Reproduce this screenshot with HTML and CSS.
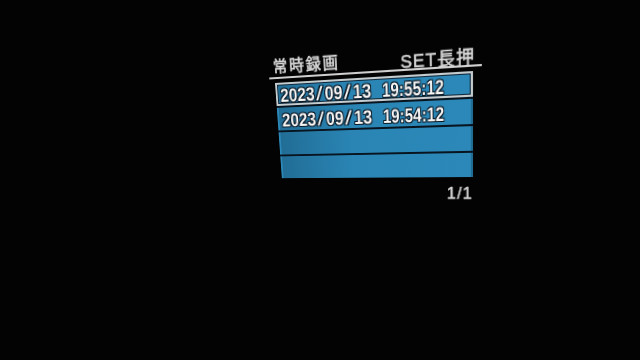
FILE: index.html
```html
<!DOCTYPE html>
<html lang="ja">
<head>
  <meta charset="UTF-8" />
  <meta name="viewport" content="width=device-width, initial-scale=1.0"/>
  <title>常時録画</title>
  <link rel="stylesheet" href="styles.css">
</head>
<body>
  <div class="screen">
    <div class="header">
      <span class="title">常時録画</span>
      <span class="hint">SET長押</span>
    </div>
    <div class="list">
      <div class="row selected">
        <span class="date">2023<span class="sep">/</span>09<span class="sep">/</span>13</span><span class="time">19:55:12</span>
      </div>
      <div class="row">
        <span class="date">2023<span class="sep">/</span>09<span class="sep">/</span>13</span><span class="time">19:54:12</span>
      </div>
      <div class="row"></div>
      <div class="row"></div>
    </div>
    <div class="pager">1/1</div>
  </div>
</body>
</html>
```

FILE: styles.css
```css
html, body {
  margin: 0;
  height: 100%;
  background-color: #030303;
}
body {
  padding: 48px 0 0 264px;
  box-sizing: border-box;
  overflow: hidden;
  font-family: "Liberation Sans", "Noto Sans CJK JP", sans-serif;
}
/* the photo looks at the screen a bit from the side */
.screen {
  width: 214px;
  transform-origin: 0 0;
  transform: matrix3d(0.89255, -0.07237, 0, -0.00051249, 0.07436, 0.98875, 0, 0.00035582, 0, 0, 1, 0, 3.07, 0.179, 0, 1);
  filter: blur(0.3px);
}
.header {
  display: flex;
  justify-content: space-between;
  align-items: flex-end;
  height: 30px;
  border-bottom: 2px solid #cfcfcf;
  padding: 0 6px 0 5px;
  color: #d8d8d8;
}
.title {
  font-family: "Noto Sans CJK JP", sans-serif;
  font-size: 16px;
  line-height: 16px;
  letter-spacing: 2px;
  padding-bottom: 4.5px;
  -webkit-text-stroke: 0.6px #d8d8d8;
}
.hint {
  font-size: 16.5px;
  line-height: 14px;
  letter-spacing: 1px;
  -webkit-text-stroke: 0.5px #d8d8d8;
}
.list {
  display: grid;
  grid-template-columns: minmax(0, 1fr);
  grid-auto-rows: 24px;
  row-gap: 2px;
  margin: 4px 8px 0 6px;
  background-color: #08141f;
}
.row {
  display: flex;
  box-sizing: border-box;
  min-width: 0;
  border: 2px solid transparent;
  padding: 3px 0 0 3px;
  background: linear-gradient(to right, #216d96, #2a85b4 40%, #2b88b8);
  color: #f6f6f6;
  font-size: 19.5px;
  font-weight: bold;
  line-height: 17px;
  white-space: nowrap;
  text-shadow: 1px 1px 0 #0a1824, -1px -1px 0 #0a1824, 1px -1px 0 #0a1824, -1px 1px 0 #0a1824;
}
.row.selected {
  border-color: #c4cccf;
  box-shadow: inset 0 0 0 1px #10283a;
}
.date, .time {
  display: block;
  flex: none;
  transform-origin: left center;
}
.date {
  width: 97px;
  margin-right: 11px;
  transform: scaleX(0.87);
}
.time {
  transform: scaleX(0.77);
}
/* the screen font draws its slashes long */
.sep {
  display: inline-block;
  width: 12.4px;
  text-align: center;
  font-weight: normal;
  transform: scaleX(1.6);
}
.pager {
  margin-top: 10px;
  padding-right: 8px;
  text-align: right;
  color: #d6d6d6;
  font-size: 16px;
  line-height: 14px;
  letter-spacing: 1px;
  -webkit-text-stroke: 0.4px #d6d6d6;
}
```
